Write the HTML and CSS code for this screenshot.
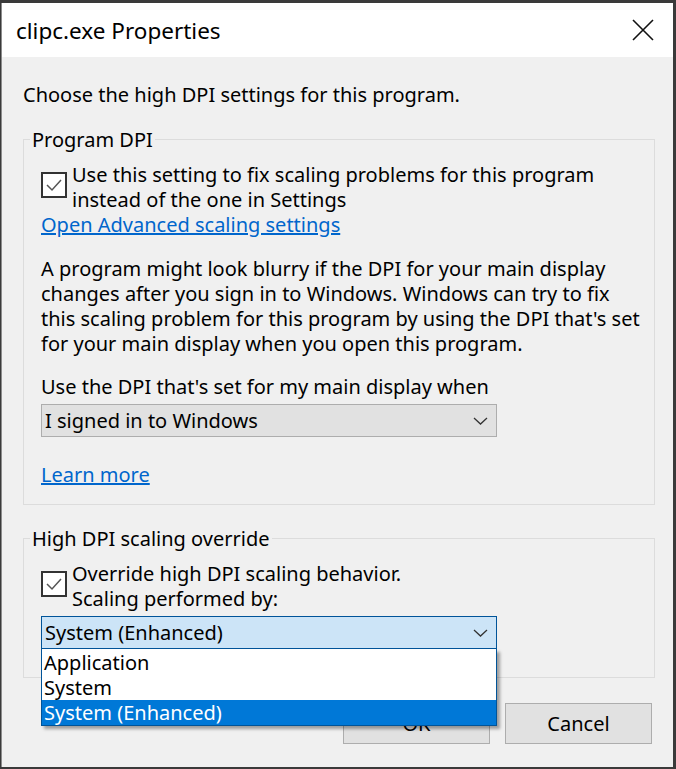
FILE: index.html
```html
<!DOCTYPE html>
<html lang="en">
<head>
    <meta charset="UTF-8" />
    <title>clipc.exe Properties</title>
    <link rel="stylesheet" href="styles.css">
</head>
<body>
    <div class="window">
        <div class="titlebar">
            <span class="title">clipc.exe Properties</span>
            <span class="close">
                <svg width="22" height="22" viewBox="0 0 22 22"><path d="M1 1 L21 21 M21 1 L1 21" stroke="#111" stroke-width="1.6" fill="none"/></svg>
            </span>
        </div>

        <div class="content">
            <p class="intro">Choose the high DPI settings for this program.</p>

            <fieldset class="group group-program">
                <legend>Program DPI</legend>
                <div class="check-row">
                    <span class="checkbox">
                        <svg width="22" height="22" viewBox="0 0 22 22"><path d="M4 11 L9 16 L18 6" stroke="#555" stroke-width="1.5" fill="none"/></svg>
                    </span>
                    <span class="check-text">Use this setting to fix scaling problems for this program<br>instead of the one in Settings</span>
                </div>
                <a class="link" href="#">Open Advanced scaling settings</a>
                <p class="desc">A program might look blurry if the DPI for your main display<br>changes after you sign in to Windows. Windows can try to fix<br>this scaling problem for this program by using the DPI that's set<br>for your main display when you open this program.</p>
                <p class="select-label">Use the DPI that's set for my main display when</p>
                <div class="select">
                    <span>I signed in to Windows</span>
                    <svg class="chevron" width="15" height="8" viewBox="0 0 15 8"><path d="M1 1 L7.5 7 L14 1" stroke="#333" stroke-width="1.3" fill="none"/></svg>
                </div>
                <a class="link learn" href="#">Learn more</a>
            </fieldset>

            <fieldset class="group group-override">
                <legend>High DPI scaling override</legend>
                <div class="check-row">
                    <span class="checkbox">
                        <svg width="22" height="22" viewBox="0 0 22 22"><path d="M4 11 L9 16 L18 6" stroke="#555" stroke-width="1.5" fill="none"/></svg>
                    </span>
                    <span class="check-text">Override high DPI scaling behavior.<br>Scaling performed by:</span>
                </div>
                <div class="select-wrap">
                    <div class="select select-open">
                        <span>System (Enhanced)</span>
                        <svg class="chevron" width="15" height="8" viewBox="0 0 15 8"><path d="M1 1 L7.5 7 L14 1" stroke="#333" stroke-width="1.3" fill="none"/></svg>
                    </div>
                    <ul class="dropdown">
                        <li>Application</li>
                        <li>System</li>
                        <li class="selected">System (Enhanced)</li>
                    </ul>
                </div>
            </fieldset>

            <div class="buttons">
                <button>OK</button>
                <button>Cancel</button>
            </div>
        </div>
    </div>
</body>
</html>
```

FILE: styles.css
```css
* {
    box-sizing: border-box;
    margin: 0;
    padding: 0;
}

body {
    background: #3a3a3a;
    font-family: 'Noto Sans', 'Open Sans', sans-serif;
    font-size: 20px;
    line-height: 25px;
    color: #000;
    padding-top: 3px;
}

.window {
    width: 672px;
    height: 764px;
    margin-left: 1px;
    background: #f0f0f0;
    border-left: 1px solid #8c8c8c;
    display: flex;
    flex-direction: column;
}

.titlebar {
    height: 54px;
    flex-shrink: 0;
    background: #fff;
    display: flex;
    align-items: center;
    justify-content: space-between;
    padding: 0 19px 0 14px;
}

.title {
    font-size: 22.5px;
}

.close svg {
    display: block;
}

.content {
    padding: 25px 18px 0 21px;
}

.intro {
    margin-bottom: 20px;
}

.group {
    border: 1px solid #dcdcdc;
    padding: 10px 16px 17px 17px;
    min-inline-size: 0;
}

.group legend {
    margin-left: -11px;
    padding: 0 2px;
}

.group-override {
    margin-top: 21px;
    padding-bottom: 28px;
}

.check-row {
    display: flex;
    align-items: flex-start;
}

.checkbox {
    width: 26px;
    height: 26px;
    border: 2px solid #333;
    background: #fff;
    margin-top: 10px;
    margin-right: 5px;
    flex-shrink: 0;
    display: flex;
    align-items: center;
    justify-content: center;
}

.check-text {
    white-space: nowrap;
}

.link {
    color: #0066cc;
    text-decoration: underline;
    display: block;
    width: max-content;
}

.desc {
    margin-top: 19px;
    white-space: nowrap;
}

.select-label {
    margin-top: 18px;
}

.select {
    width: 456px;
    height: 33px;
    margin-top: 5px;
    background: #e1e1e1;
    border: 1px solid #adadad;
    display: flex;
    align-items: center;
    justify-content: space-between;
    padding: 0 8px 0 3px;
}

.chevron {
    display: block;
}

.learn {
    margin-top: 25px;
}

.select-wrap {
    position: relative;
    margin-top: 5px;
}

.select-open {
    margin-top: 0;
    background: #cce4f7;
    border-color: #005499;
}

.dropdown {
    position: absolute;
    top: 33px;
    left: 0;
    width: 456px;
    list-style: none;
    background: #fff;
    border: 1px solid #005499;
    border-top: none;
    padding-top: 1px;
    box-shadow: 3px 3px 3px rgba(0, 0, 0, 0.35);
    z-index: 2;
}

.dropdown li {
    height: 25px;
    padding-left: 2px;
}

.dropdown .selected {
    background: #0078d7;
    color: #fff;
}

.buttons {
    display: flex;
    justify-content: flex-end;
    gap: 15px;
    margin-top: 25px;
    padding-right: 3px;
}

.buttons button {
    width: 147px;
    height: 41px;
    background: #e1e1e1;
    border: 1px solid #adadad;
    font-family: inherit;
    font-size: 20px;
    color: #000;
}
```
